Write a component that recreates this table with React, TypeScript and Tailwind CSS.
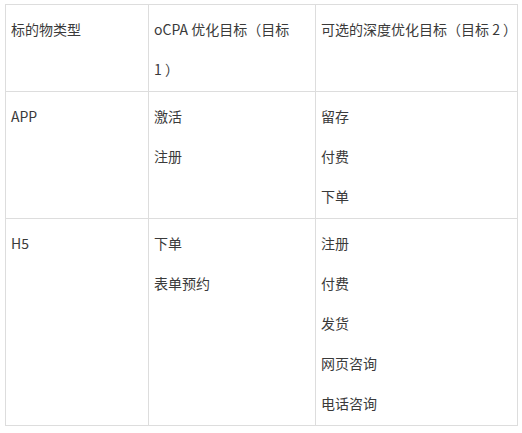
import React from "react";

const rows: { type: string; a: string[]; b: string[] }[] = [
  { type: "APP", a: ["激活", "注册"], b: ["留存", "付费", "下单"] },
  { type: "H5", a: ["下单", "表单预约"], b: ["注册", "付费", "发货", "网页咨询", "电话咨询"] },
];

function Cell({ children }: { children: React.ReactNode }) {
  return (
    <td className="border border-[#dddddd] align-top pl-[5px] pr-[4px] pt-[4px] pb-[2px]">
      {children}
    </td>
  );
}

export default function App() {
  return (
    <div
      className="w-[522px] h-[433px] bg-white pt-[4px] pl-[5px] text-[14px] text-[#3a3a3a]"
      style={{ fontFamily: '"Noto Sans CJK SC", "Noto Sans", sans-serif' }}
    >
      <table className="table-fixed border-collapse w-[512px]">
        <colgroup>
          <col className="w-[143px]" />
          <col className="w-[167px]" />
          <col className="w-[202px]" />
        </colgroup>
        <tbody>
          <tr>
            <Cell>
              <p className="leading-[40px]">标的物类型</p>
            </Cell>
            <Cell>
              <p className="leading-[40px] whitespace-nowrap">
                oCPA 优化目标（目标
                <br />1 ）
              </p>
            </Cell>
            <Cell>
              <p className="leading-[40px] whitespace-nowrap">
                可选的深度优化目标（目标 2 ）
              </p>
            </Cell>
          </tr>
          {rows.map((r) => (
            <tr key={r.type}>
              <Cell>
                <p className="leading-[40px]">{r.type}</p>
              </Cell>
              <Cell>
                {r.a.map((t) => (
                  <p key={t} className="leading-[40px]">
                    {t}
                  </p>
                ))}
              </Cell>
              <Cell>
                {r.b.map((t) => (
                  <p key={t} className="leading-[40px]">
                    {t}
                  </p>
                ))}
              </Cell>
            </tr>
          ))}
        </tbody>
      </table>
    </div>
  );
}
